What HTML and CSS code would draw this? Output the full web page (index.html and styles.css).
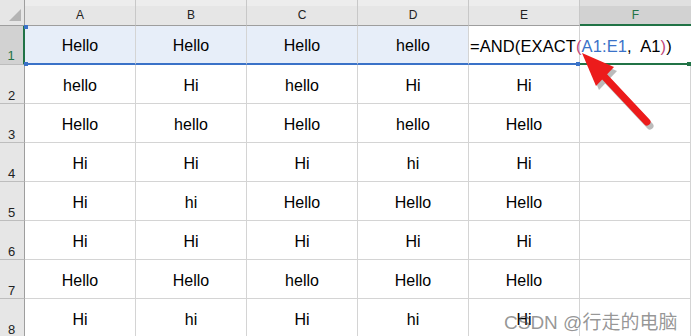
FILE: index.html
```html
<!DOCTYPE html>
<html>
<head>
<meta charset="utf-8">
<link rel="stylesheet" href="styles.css">
</head>
<body>
<div class="wrap">
  <div class="sheet">
    <div class="corner"><span class="tri"></span></div>
    <div class="colhead">A</div>
    <div class="colhead">B</div>
    <div class="colhead">C</div>
    <div class="colhead">D</div>
    <div class="colhead">E</div>
    <div class="colhead sel">F</div>

    <div class="rowhead sel">1</div>
    <div class="cell hl first">Hello</div>
    <div class="cell hl">Hello</div>
    <div class="cell hl">Hello</div>
    <div class="cell hl">hello</div>
    <div class="cell edit"><span class="formula">=AND(EXACT<span class="p2">(</span><span class="ref">A1:E1</span>,&nbsp; A1<span class="p2">)</span>)</span></div>
    <div class="cell active"></div>

    <div class="rowhead">2</div>
    <div class="cell">hello</div><div class="cell">Hi</div><div class="cell">hello</div><div class="cell">Hi</div><div class="cell">Hi</div><div class="cell"></div>

    <div class="rowhead">3</div>
    <div class="cell">Hello</div><div class="cell">hello</div><div class="cell">Hello</div><div class="cell">hello</div><div class="cell">Hello</div><div class="cell"></div>

    <div class="rowhead">4</div>
    <div class="cell">Hi</div><div class="cell">Hi</div><div class="cell">Hi</div><div class="cell">hi</div><div class="cell">Hi</div><div class="cell"></div>

    <div class="rowhead">5</div>
    <div class="cell">Hi</div><div class="cell">hi</div><div class="cell">Hello</div><div class="cell">Hello</div><div class="cell">Hello</div><div class="cell"></div>

    <div class="rowhead">6</div>
    <div class="cell">Hi</div><div class="cell">Hi</div><div class="cell">Hi</div><div class="cell">Hi</div><div class="cell">Hi</div><div class="cell"></div>

    <div class="rowhead">7</div>
    <div class="cell">Hello</div><div class="cell">Hello</div><div class="cell">hello</div><div class="cell">Hello</div><div class="cell">Hello</div><div class="cell"></div>

    <div class="rowhead">8</div>
    <div class="cell">Hi</div><div class="cell">hi</div><div class="cell">Hi</div><div class="cell">hi</div><div class="cell">Hi</div><div class="cell"></div>
  </div>

  <span class="handle h1"></span>
  <span class="handle h2"></span>
  <span class="handle h3"></span>
  <span class="handle h4"></span>

  <svg class="arrow" width="691" height="336" viewBox="0 0 691 336">
    <g opacity="0.5" transform="translate(3,4)">
      <line x1="647" y1="122" x2="601" y2="73" stroke="#7a7a7a" stroke-width="7" stroke-linecap="round"/>
      <polygon points="582,53 614,67 596,86" fill="#7a7a7a"/>
    </g>
    <line x1="647" y1="122" x2="601" y2="73" stroke="#ec1b1b" stroke-width="7" stroke-linecap="round"/>
    <polygon points="582,53 614,67 596,86" fill="#ec1b1b"/>
  </svg>

  <div class="watermark">CSDN @行走的电脑</div>
</div>
</body>
</html>
```

FILE: styles.css
```css
* { box-sizing: border-box; }
html, body { margin: 0; padding: 0; background: #ffffff; }
body { font-family: "Liberation Sans", Arial, "Noto Sans CJK SC", sans-serif; overflow: hidden; }

.wrap { position: relative; width: 691px; height: 336px; overflow: hidden; }

.sheet {
  display: grid;
  grid-template-columns: 25px repeat(6, 111px);
  grid-template-rows: 26px repeat(8, 39px);
  background: #ffffff;
}

.corner {
  background: #e6e6e6;
  border-right: 1px solid #9e9e9e;
  border-bottom: 1px solid #9e9e9e;
  position: relative;
}
.corner .tri {
  position: absolute;
  left: 9px; top: 9px;
  width: 0; height: 0;
  border-left: 12px solid transparent;
  border-bottom: 12px solid #b4b4b4;
}

.colhead {
  background: linear-gradient(#ededed 0, #ededed 6px, #e6e6e6 6px);
  border-right: 1px solid #c8c8c8;
  border-bottom: 1px solid #9e9e9e;
  display: flex;
  align-items: center;
  justify-content: center;
  padding-top: 5px;
  font-size: 12px;
  color: #222;
}
.colhead.sel {
  background: linear-gradient(#e0e0e0 0, #e0e0e0 6px, #d2d2d2 6px);
  color: #217346;
  border-bottom: 2px solid #217346;
  border-right: none;
}

.rowhead {
  background: #e6e6e6;
  border-right: 1px solid #9e9e9e;
  border-bottom: 1px solid #bdbdbd;
  display: flex;
  align-items: flex-end;
  justify-content: center;
  font-size: 13px;
  line-height: 15px;
  color: #222;
  padding-right: 1px;
}
.rowhead.sel {
  background: #d2d2d2;
  color: #217346;
  border-right: 2px solid #217346;
  padding-bottom: 1px;
}

.cell {
  border-right: 1px solid #d4d4d4;
  border-bottom: 1px solid #d4d4d4;
  display: flex;
  align-items: center;
  justify-content: center;
  padding-top: 3px;
  font-size: 16px;
  color: #000;
  white-space: nowrap;
}
.cell.hl {
  background: #e7eef9;
  border-bottom: 2px solid #3a72c8;
}
.cell.edit {
  background: #ffffff;
  border-bottom: 2px solid #3a72c8;
  justify-content: flex-start;
  padding-left: 1px;
  overflow: visible;
  position: relative;
  z-index: 2;
}
.cell.active {
  background: transparent;
  border-bottom: 2px solid #217346;
  border-right: none;
}
.formula { font-size: 16.5px; letter-spacing: 0.1px; }
.formula .ref { color: #3a72c8; }
.formula .p2 { color: #c2477a; }

.handle {
  position: absolute;
  width: 4px; height: 4px;
  background: #3a72c8;
  z-index: 3;
}
.h1 { left: 24px; top: 25px; }
.h2 { left: 24px; top: 62px; }
.h3 { left: 576px; top: 62px; }
.h4 { left: 687px; top: 62px; background: #217346; }

.arrow { position: absolute; left: 0; top: 0; z-index: 5; }

.watermark {
  position: absolute;
  left: 504px;
  top: 307px;
  font-size: 19px;
  color: rgba(80, 80, 80, 0.6);
  font-family: "Liberation Sans", "Noto Sans CJK SC", sans-serif;
  z-index: 6;
  white-space: nowrap;
}
```
